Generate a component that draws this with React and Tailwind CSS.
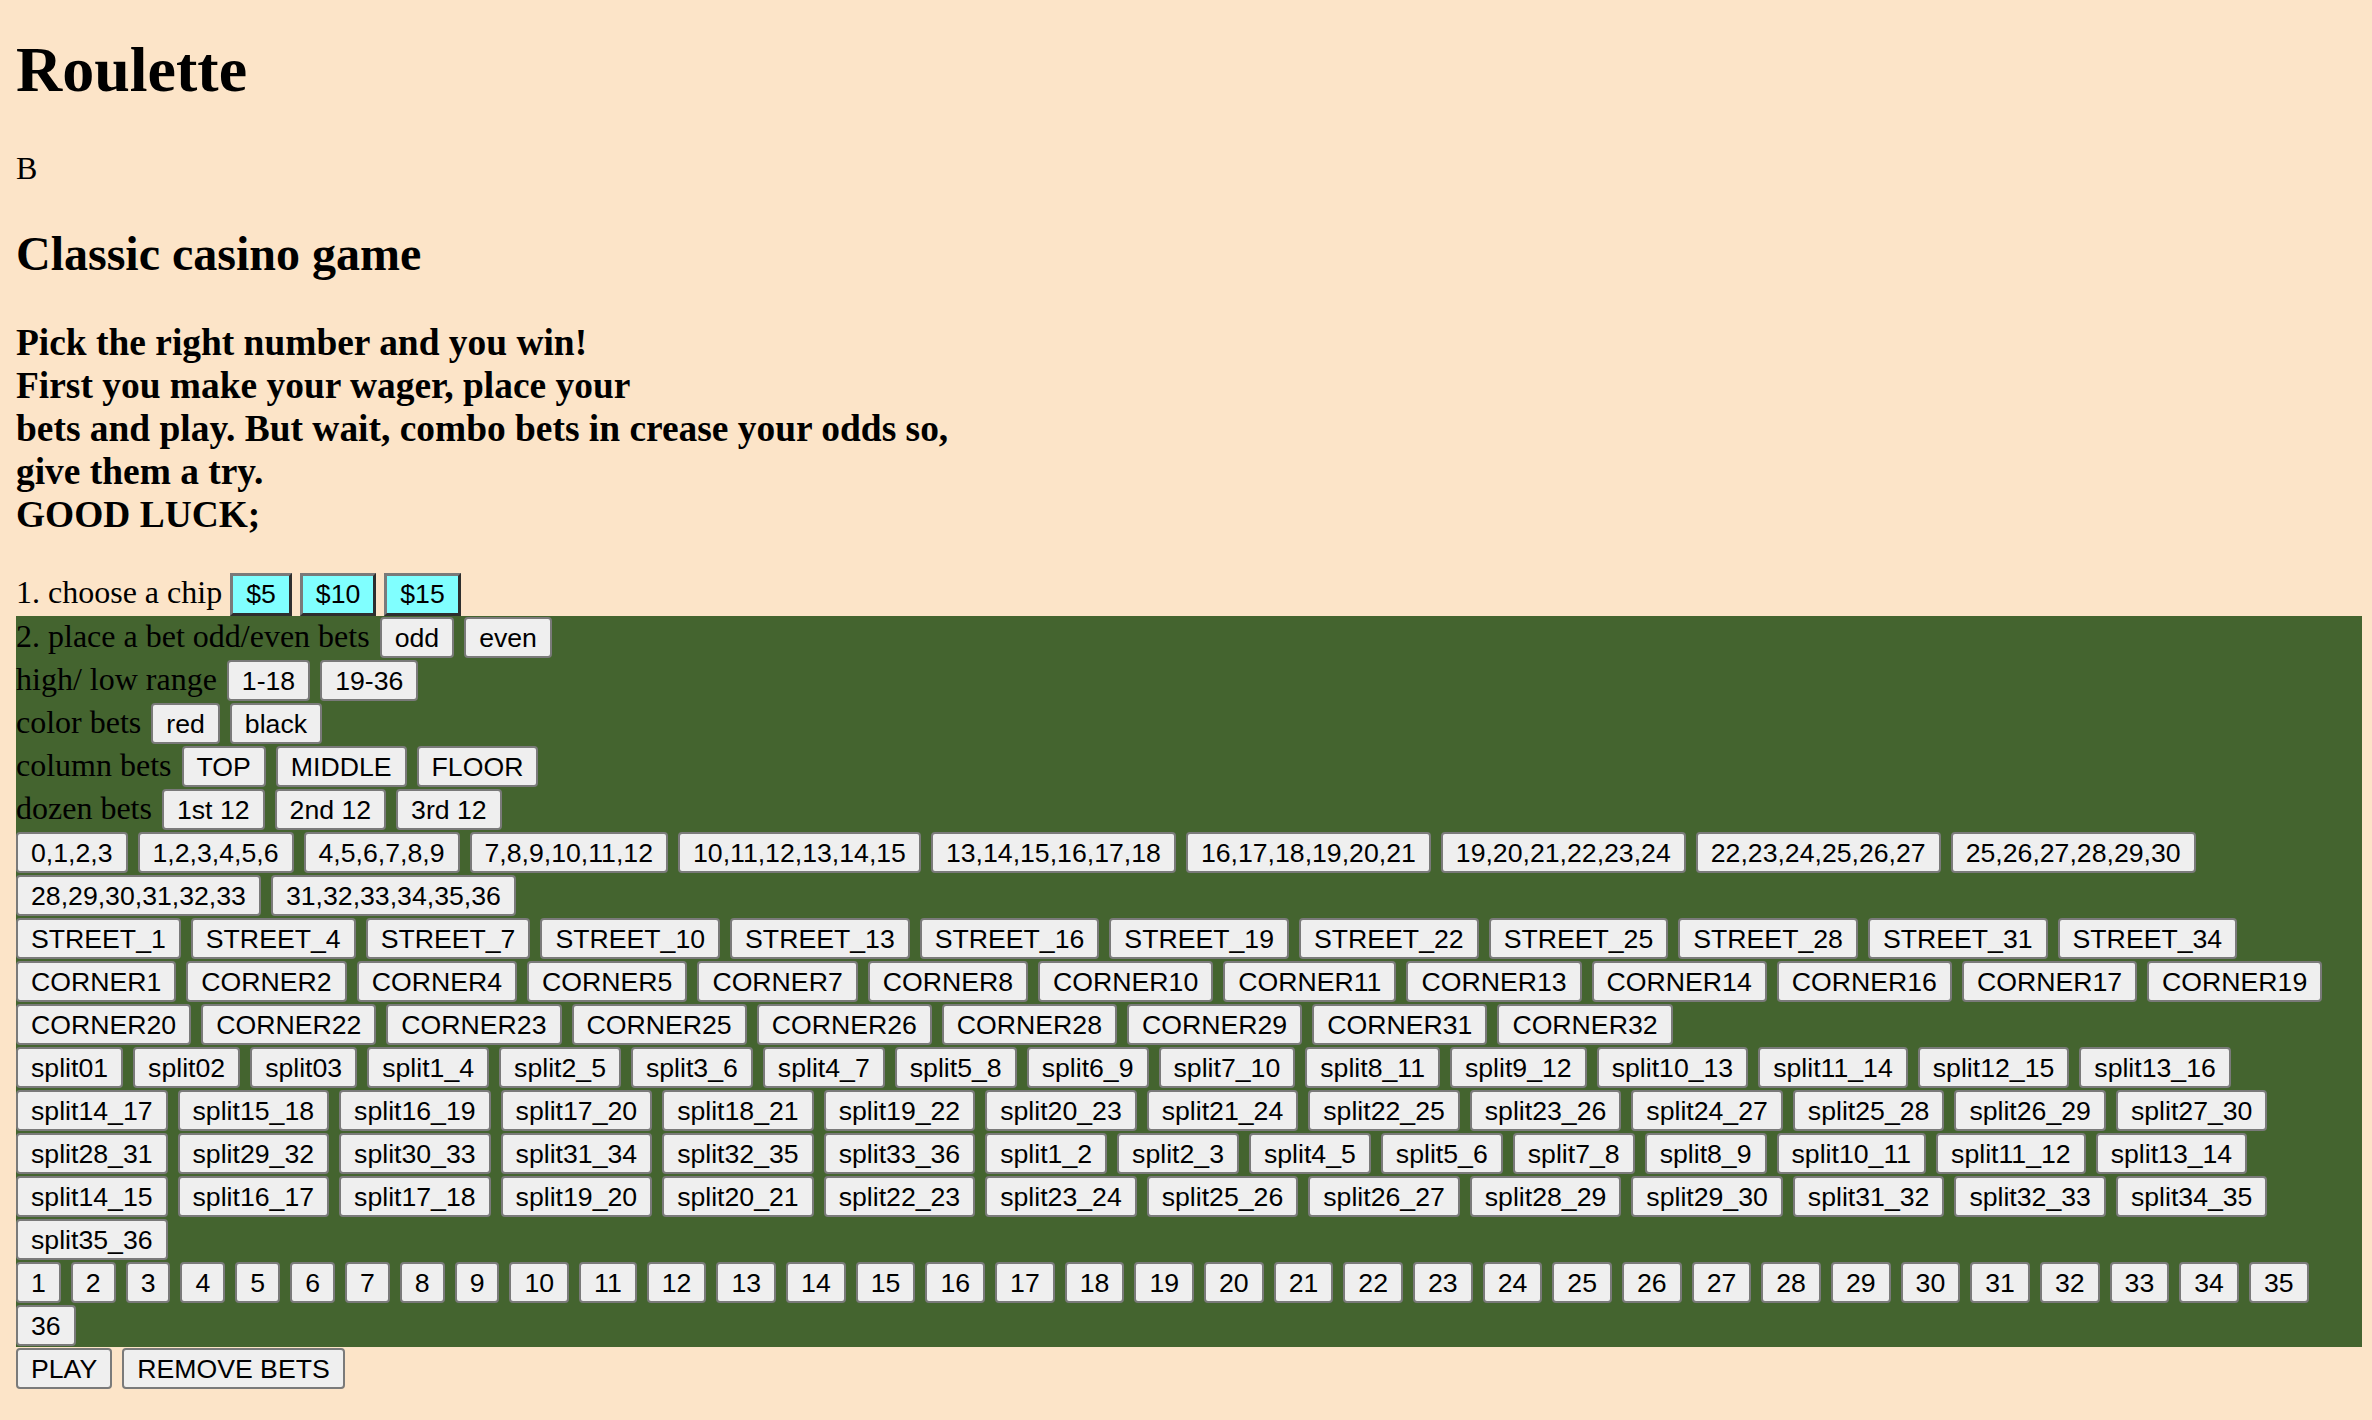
const sixLines = [
  ['0,1,2,3', '1,2,3,4,5,6', '4,5,6,7,8,9', '7,8,9,10,11,12', '10,11,12,13,14,15', '13,14,15,16,17,18', '16,17,18,19,20,21', '19,20,21,22,23,24', '22,23,24,25,26,27', '25,26,27,28,29,30'],
  ['28,29,30,31,32,33', '31,32,33,34,35,36'],
]

const streets = [1, 4, 7, 10, 13, 16, 19, 22, 25, 28, 31, 34].map(n => `STREET_${n}`)

const corners = [
  [1, 2, 4, 5, 7, 8, 10, 11, 13, 14, 16, 17, 19].map(n => `CORNER${n}`),
  [20, 22, 23, 25, 26, 28, 29, 31, 32].map(n => `CORNER${n}`),
]

const splits = [
  ['split01', 'split02', 'split03', 'split1_4', 'split2_5', 'split3_6', 'split4_7', 'split5_8', 'split6_9', 'split7_10', 'split8_11', 'split9_12', 'split10_13', 'split11_14', 'split12_15', 'split13_16'],
  ['split14_17', 'split15_18', 'split16_19', 'split17_20', 'split18_21', 'split19_22', 'split20_23', 'split21_24', 'split22_25', 'split23_26', 'split24_27', 'split25_28', 'split26_29', 'split27_30'],
  ['split28_31', 'split29_32', 'split30_33', 'split31_34', 'split32_35', 'split33_36', 'split1_2', 'split2_3', 'split4_5', 'split5_6', 'split7_8', 'split8_9', 'split10_11', 'split11_12', 'split13_14'],
  ['split14_15', 'split16_17', 'split17_18', 'split19_20', 'split20_21', 'split22_23', 'split23_24', 'split25_26', 'split26_27', 'split28_29', 'split29_30', 'split31_32', 'split32_33', 'split34_35'],
  ['split35_36'],
]

const numbers = [
  Array.from({ length: 35 }, (_, i) => String(i + 1)),
  ['36'],
]

const BetButton = ({ children }) => (
  <button className="border-2 border-solid border-[#7a7a7a] bg-[#efefef] rounded-[4px] px-[13px] pt-[4px] pb-[2px] leading-[31px] text-[26.67px] text-black whitespace-nowrap font-['Liberation_Sans',Arial,sans-serif]">
    {children}
  </button>
)

const ChipButton = ({ children }) => (
  <button className="border-[3px] border-solid border-t-[#7a7a7a] border-l-[#7a7a7a] border-b-[#2e2e2e] border-r-[#2e2e2e] bg-[#80ffff] px-[13px] py-[3px] leading-[31px] text-[26.67px] text-black whitespace-nowrap font-['Liberation_Sans',Arial,sans-serif]">
    {children}
  </button>
)

const Row = ({ label, items }) => (
  <div className="flex items-baseline gap-[10px] h-[43px] pt-[1px]">
    {label && <span className="whitespace-nowrap">{label}</span>}
    {items.map(item => (
      <BetButton key={item}>{item}</BetButton>
    ))}
  </div>
)

export default function App() {
  return (
    <div className="min-h-screen bg-[#fce4c8] text-black pl-[16px] pr-[10px] pt-[33px] font-['Liberation_Serif','Times_New_Roman',serif] text-[32px] leading-[37px]">
      <h1 className="text-[64px] leading-[74px] font-bold">Roulette</h1>
      <p className="mt-[43px]">B</p>
      <h2 className="mt-[39px] text-[48px] leading-[55px] font-bold">Classic casino game</h2>
      <h3 className="mt-[40px] text-[37.44px] leading-[43px] font-bold">
        Pick the right number and you win!
        <br />
        First you make your wager, place your
        <br />
        bets and play. But wait, combo bets in crease your odds so,
        <br />
        give them a try.
        <br />
        GOOD LUCK;
      </h3>

      <div className="mt-[37px] flex items-baseline gap-[8px] h-[43px]">
        <span>1. choose a chip</span>
        <ChipButton>$5</ChipButton>
        <ChipButton>$10</ChipButton>
        <ChipButton>$15</ChipButton>
      </div>

      <div className="bg-[#44642f]">
        <Row label="2. place a bet odd/even bets" items={['odd', 'even']} />
        <Row label="high/ low range" items={['1-18', '19-36']} />
        <Row label="color bets" items={['red', 'black']} />
        <Row label="column bets" items={['TOP', 'MIDDLE', 'FLOOR']} />
        <Row label="dozen bets" items={['1st 12', '2nd 12', '3rd 12']} />
        {sixLines.map((row, i) => <Row key={`six${i}`} items={row} />)}
        <Row items={streets} />
        {corners.map((row, i) => <Row key={`corner${i}`} items={row} />)}
        {splits.map((row, i) => <Row key={`split${i}`} items={row} />)}
        {numbers.map((row, i) => <Row key={`num${i}`} items={row} />)}
      </div>

      <Row items={['PLAY', 'REMOVE BETS']} />
    </div>
  )
}
